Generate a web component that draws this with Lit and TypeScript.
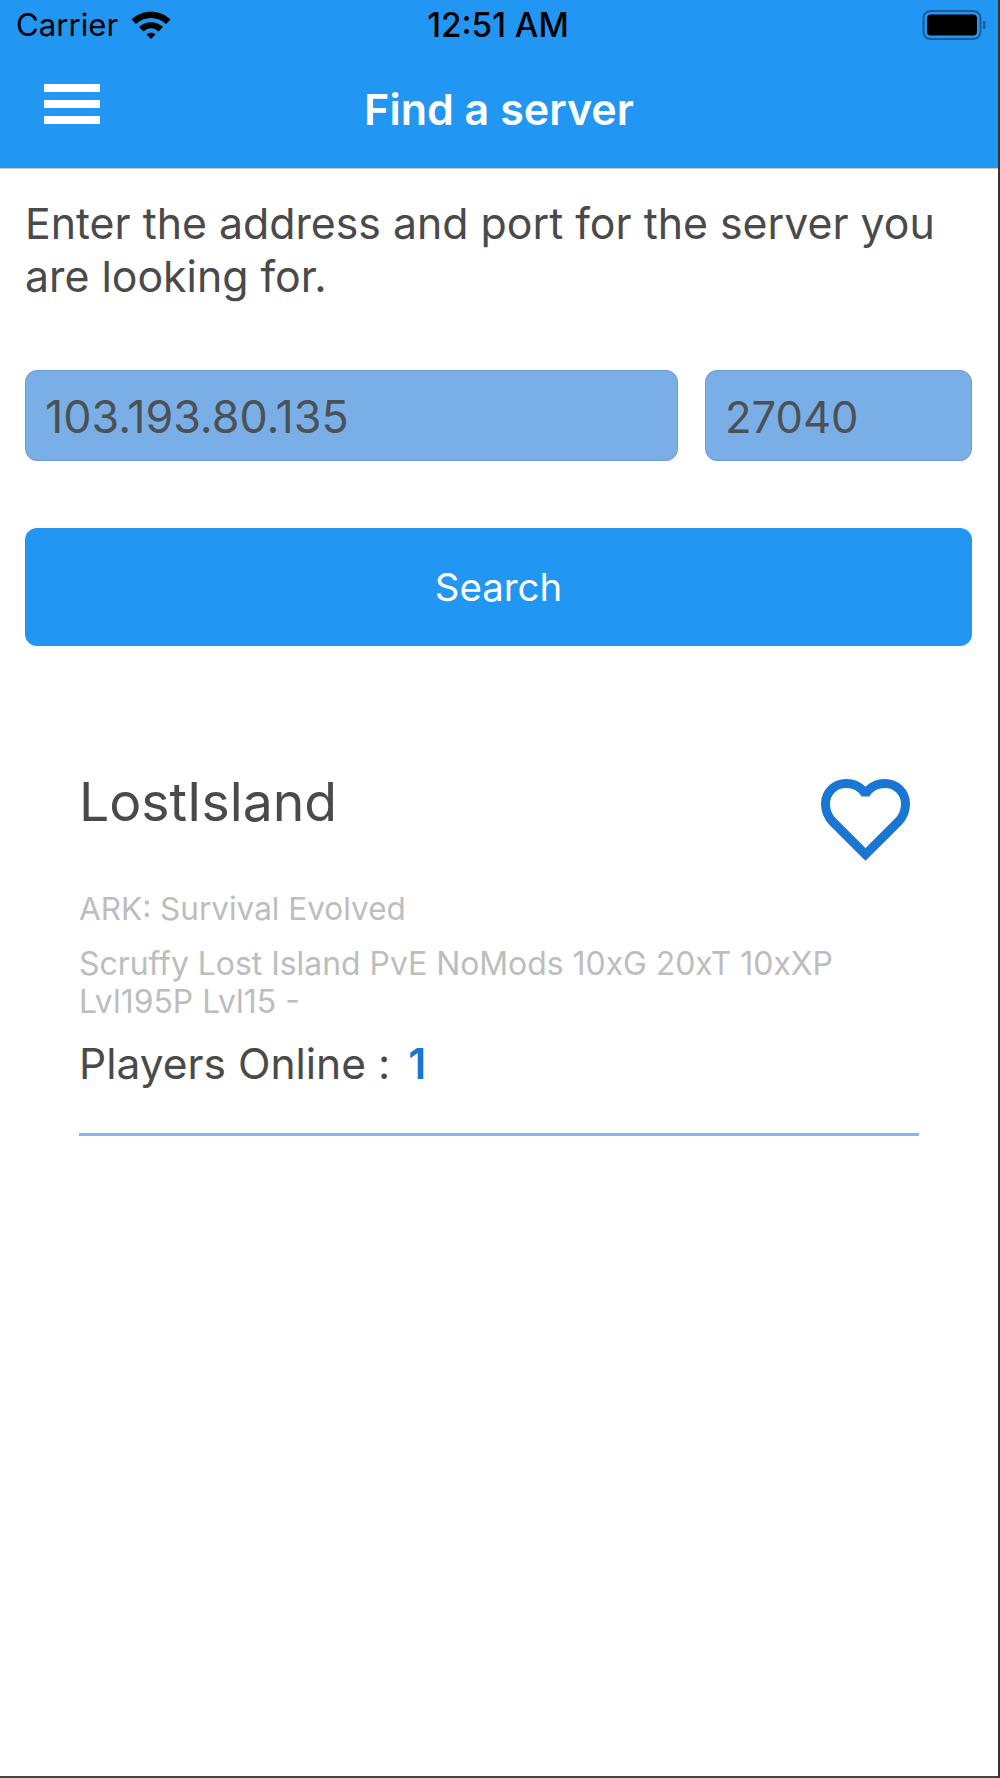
import { LitElement, html, css } from "lit";
import { customElement } from "lit/decorators.js";

@customElement("app-root")
export class AppRoot extends LitElement {
  static override styles = css`
    :host {
      display: block;
      box-sizing: border-box;
      width: 1000px;
      height: 1778px;
      background: #fff;
      border-right: 2px solid #333;
      border-bottom: 2px solid #444;
      font-family: Inter, "Liberation Sans", sans-serif;
      color: #4a4a4a;
      overflow: hidden;
    }

    .top {
      height: 168px;
      background: #2196f3;
      border-bottom: 1px solid #c8c8c8;
    }

    .status {
      height: 50px;
      display: grid;
      grid-template-columns: 1fr auto 1fr;
      align-items: center;
      padding: 0 12px 0 16px;
      color: #000;
      font-size: 31.2px;
    }

    .carrier {
      display: flex;
      align-items: center;
      gap: 13px;
    }

    .time {
      margin-left: -6px;
      font-size: 33.300px;
      font-weight: 500;
    }

    .battery {
      justify-self: end;
      display: block;
    }

    .bar {
      height: 118px;
      display: grid;
      grid-template-columns: 1fr auto 1fr;
      align-items: center;
      padding: 0 44px;
    }

    .burger {
      display: flex;
      flex-direction: column;
      gap: 8px;
      width: 56px;
      margin-top: -10px;
    }

    .burger span {
      height: 8px;
      background: #fff;
    }

    .title {
      color: #fff;
      font-size: 43px;
      font-weight: 600;
    }

    .content {
      padding: 28px 26px 0 25px;
    }

    .intro {
      margin: 0;
      font-size: 42.8px;
      line-height: 53px;
    }

    .fields {
      display: flex;
      gap: 27px;
      margin-top: 67px;
    }

    .field {
      box-sizing: border-box;
      height: 91px;
      display: flex;
      align-items: center;
      padding: 2px 0 0 19px;
      background: #7aaee6;
      border: 1px solid #6a9bd0;
      border-radius: 12px;
      font-size: 44.8px;
      color: #4c5156;
    }

    .address {
      flex: 1;
    }

    .port {
      width: 267px;
      font-size: 43.5px;
    }

    .search {
      display: flex;
      align-items: center;
      justify-content: center;
      height: 118px;
      margin-top: 67px;
      background: #2196f3;
      border-radius: 12px;
      color: #fff;
      font-size: 38.4px;
    }

    .server {
      margin: 125px 53px 0 54px;
      padding-bottom: 43px;
      border-bottom: 3px solid #86b8ec;
    }

    .head {
      display: flex;
      justify-content: space-between;
      align-items: flex-start;
    }

    .name {
      font-size: 53.5px;
      line-height: 62px;
    }

    .heart {
      margin: 8px 9px 0 0;
      display: block;
    }

    .game {
      margin-top: 28px;
      font-size: 31.5px;
      line-height: 36px;
      color: #bdbdbd;
    }

    .desc {
      margin-top: 18px;
      font-size: 31.9px;
      line-height: 37.5px;
      color: #bdbdbd;
    }

    .players {
      margin-top: 18px;
      font-size: 42.5px;
      line-height: 52px;
    }

    .players b {
      margin-left: 6px;
      font-weight: 600;
      color: #1976d2;
    }
  `;

  override render() {
    return html`
      <div class="top">
        <div class="status">
          <div class="carrier">
            Carrier
            <svg width="40" height="30" viewBox="0 0 40 30">
              <path
                d="M0.5 9.500 C11 -1 29 -1 39.500 9.500 L35 14 C27 6 13 6 5 14 Z"
                fill="#000"
              />
              <path
                d="M8 17 C14.500 10.500 25.500 10.500 32 17 L27.500 21.500 C23 17 17 17 12.500 21.500 Z"
                fill="#000"
              />
              <path d="M15.500 24.500 C18 22 22 22 24.500 24.500 L20 29 Z" fill="#000" />
            </svg>
          </div>
          <div class="time">12:51 AM</div>
          <svg class="battery" width="64" height="32" viewBox="0 0 64 32">
            <rect
              x="1.500"
              y="2"
              width="57"
              height="28"
              rx="7"
              fill="none"
              stroke="#1a5f9c"
              stroke-width="2"
            />
            <rect x="5" y="5.500" width="50" height="21" rx="4" fill="#000" />
            <rect x="61" y="12" width="2.500" height="8" rx="1" fill="#1a5f9c" />
          </svg>
        </div>
        <div class="bar">
          <div class="burger"><span></span><span></span><span></span></div>
          <div class="title">Find a server</div>
        </div>
      </div>
      <div class="content">
        <p class="intro">Enter the address and port for the server you are looking for.</p>
        <div class="fields">
          <div class="field address">103.193.80.135</div>
          <div class="field port">27040</div>
        </div>
        <div class="search">Search</div>
        <div class="server">
          <div class="head">
            <div class="name">LostIsland</div>
            <svg class="heart" width="89" height="84" viewBox="0 0 89 84">
              <path
                d="M44.500 75.500 L12 43 C7 38 4.500 31 4.500 25 C4.500 13 14 4.500 25 4.500 C33 4.500 40 8 44.500 15 C49 8 56 4.500 64 4.500 C75 4.500 84.500 13 84.500 25 C84.500 31 82 38 77 43 Z"
                fill="none"
                stroke="#1976d2"
                stroke-width="9"
                stroke-miterlimit="1.6"
              />
            </svg>
          </div>
          <div class="game">ARK: Survival Evolved</div>
          <div class="desc">Scruffy Lost Island PvE NoMods 10xG 20xT 10xXP<br />Lvl195P Lvl15 -</div>
          <div class="players">Players Online : <b>1</b></div>
        </div>
      </div>
    `;
  }
}
